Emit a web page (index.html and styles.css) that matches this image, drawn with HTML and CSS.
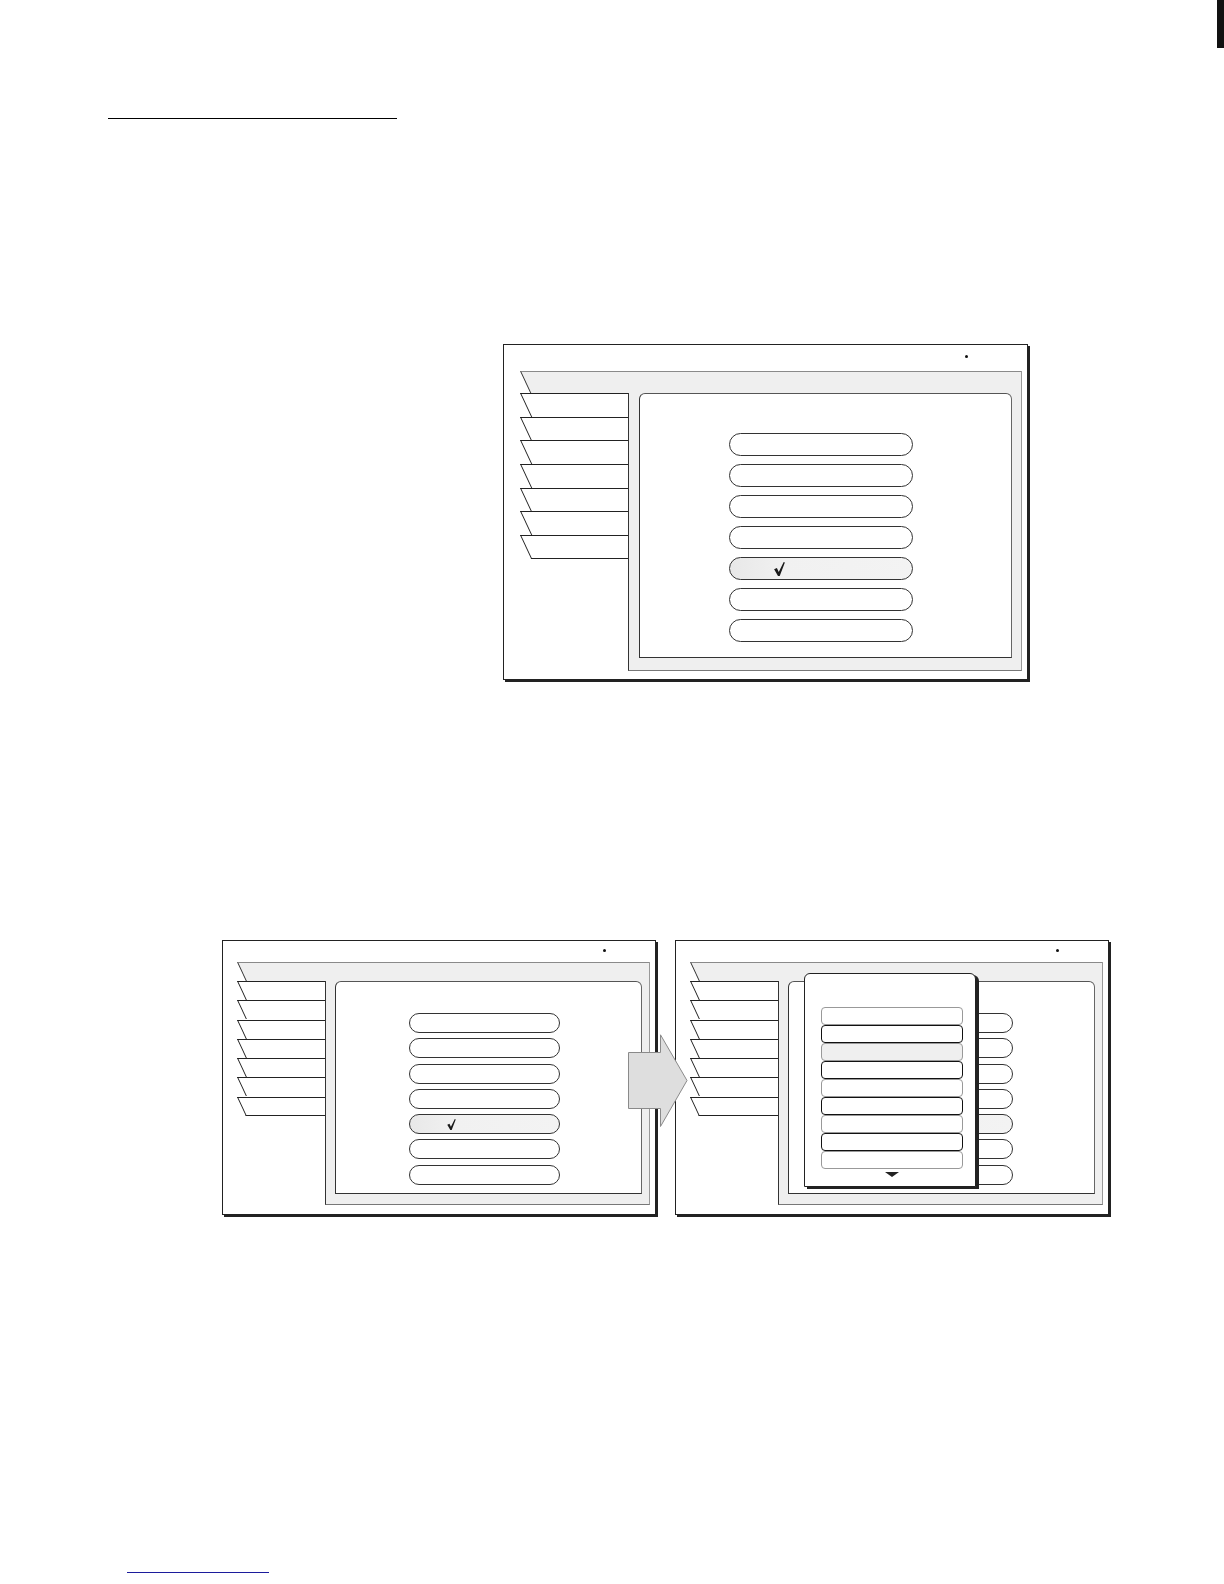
FILE: index.html
```html
<!DOCTYPE html>
<html>
<head>
<meta charset="utf-8">
<title>Menu</title>
<link rel="stylesheet" href="styles.css">
</head>
<body>
<div class="page">
  <div class="edge-mark"></div>
  <div class="rule"></div>

  <section class="fig1">
    <div class="screen lg">
      <div class="head"><span class="dot"></span></div>
      <div class="band"><div class="band-in"></div></div>
      <div class="body">
        <div class="tabs">
          <div class="tab"><div class="tab-in"></div></div>
          <div class="tab"><div class="tab-in"></div></div>
          <div class="tab"><div class="tab-in"></div></div>
          <div class="tab"><div class="tab-in"></div></div>
          <div class="tab"><div class="tab-in"></div></div>
          <div class="tab"><div class="tab-in"></div></div>
          <div class="tab"><div class="tab-in"></div></div>
        </div>
        <div class="panel">
          <div class="content">
            <div class="pill"></div>
            <div class="pill"></div>
            <div class="pill"></div>
            <div class="pill"></div>
            <div class="pill sel"><svg class="check" viewBox="0 0 10 13"><path d="M0 6.8 L2.6 5.6 L4.3 9.2 L8.9 0 L10 0.5 L5.2 12.9 L3.6 12.9 Z"/></svg></div>
            <div class="pill"></div>
            <div class="pill"></div>
          </div>
        </div>
      </div>
    </div>
  </section>

  <section class="fig2">
    <div class="screen sm">
      <div class="head"><span class="dot"></span></div>
      <div class="band"><div class="band-in"></div></div>
      <div class="body">
        <div class="tabs">
          <div class="tab"><div class="tab-in"></div></div>
          <div class="tab"><div class="tab-in"></div></div>
          <div class="tab"><div class="tab-in"></div></div>
          <div class="tab"><div class="tab-in"></div></div>
          <div class="tab"><div class="tab-in"></div></div>
          <div class="tab"><div class="tab-in"></div></div>
          <div class="tab"><div class="tab-in"></div></div>
        </div>
        <div class="panel">
          <div class="content">
            <div class="pill"></div>
            <div class="pill"></div>
            <div class="pill"></div>
            <div class="pill"></div>
            <div class="pill sel"><svg class="check" viewBox="0 0 10 13"><path d="M0 6.8 L2.6 5.6 L4.3 9.2 L8.9 0 L10 0.5 L5.2 12.9 L3.6 12.9 Z"/></svg></div>
            <div class="pill"></div>
            <div class="pill"></div>
          </div>
        </div>
      </div>
    </div>

    <div class="screen sm">
      <div class="head"><span class="dot"></span></div>
      <div class="band"><div class="band-in"></div></div>
      <div class="body">
        <div class="tabs">
          <div class="tab"><div class="tab-in"></div></div>
          <div class="tab"><div class="tab-in"></div></div>
          <div class="tab"><div class="tab-in"></div></div>
          <div class="tab"><div class="tab-in"></div></div>
          <div class="tab"><div class="tab-in"></div></div>
          <div class="tab"><div class="tab-in"></div></div>
          <div class="tab"><div class="tab-in"></div></div>
        </div>
        <div class="panel">
          <div class="content">
            <div class="pill"></div>
            <div class="pill"></div>
            <div class="pill"></div>
            <div class="pill"></div>
            <div class="pill sel"></div>
            <div class="pill"></div>
            <div class="pill"></div>
            <div class="popup">
              <div class="item"></div>
              <div class="item dark"></div>
              <div class="item sel"></div>
              <div class="item dark"></div>
              <div class="item"></div>
              <div class="item dark"></div>
              <div class="item"></div>
              <div class="item dark"></div>
              <div class="item"></div>
              <div class="more"></div>
            </div>
          </div>
        </div>
      </div>
    </div>

    <svg class="arrow" viewBox="0 0 60 94" width="60" height="94">
      <path d="M0.5 18.5 H32.5 V0.8 L59 46.5 L32.5 92.5 V74.5 H0.5 Z"/>
    </svg>
  </section>

  <div class="footline"></div>
</div>
</body>
</html>
```

FILE: styles.css
```css
* { box-sizing: border-box; }
html, body { margin: 0; padding: 0; background: #fff; }
body { font-family: "Liberation Sans", Arial, sans-serif; }

.page {
  position: relative;
  width: 1224px;
  min-height: 1584px;
  padding-top: 118px;
  overflow: hidden;
}

.edge-mark {
  position: absolute;
  top: 0;
  right: 0;
  width: 7px;
  height: 48px;
  background: #111;
}

.rule {
  margin-left: 108px;
  width: 289px;
  height: 1px;
  background: #000;
}

.fig1 { margin-top: 225px; margin-left: 503px; }

.fig2 {
  position: relative;
  margin-top: 260px;
  margin-left: 222px;
  display: flex;
  gap: 19px;
}

.footline {
  margin-top: 357px;
  margin-left: 127px;
  width: 142px;
  height: 1px;
  background: #1c1c9c;
}

/* ---------- screen ---------- */
.screen {
  width: var(--w);
  height: var(--h);
  border: 1px solid #222;
  box-shadow: 2px 2px 0 #222;
  background: #fff;
  display: flex;
  flex-direction: column;
  padding: 0 var(--padr) var(--padb) var(--padl);
  flex: none;
}

.lg {
  --w: 525px; --h: 336px;
  --head: 26px; --padl: 16px; --padr: 5px; --padb: 8px;
  --dotr: 54px; --dott: 10px;
  --bandh: 22px; --tabw: 108px; --tabh: 23.7px;
  --cml: 10px; --cmr: 9px; --cmb: 12px;
  --pl: 89px; --pt: 39px; --pw: 184px; --ph: 23px; --pg: 8px;
  --ckl: 44px; --ckw: 11px; --ckh: 14px;
}

.sm {
  --w: 434px; --h: 275px;
  --head: 21px; --padl: 14px; --padr: 5px; --padb: 9px;
  --dotr: 44px; --dott: 8px;
  --bandh: 19px; --tabw: 88px; --tabh: 19.3px;
  --cml: 9px; --cmr: 7px; --cmb: 10px;
  --pl: 73px; --pt: 31px; --pw: 151px; --ph: 20px; --pg: 5.3px;
  --ckl: 37px; --ckw: 9px; --ckh: 11px;
}

.head {
  height: var(--head);
  flex: none;
  display: flex;
  justify-content: flex-end;
  align-items: flex-start;
  padding-top: var(--dott);
  padding-right: var(--dotr);
}

.dot {
  width: 3px;
  height: 3px;
  border-radius: 50%;
  background: #111;
}

.band {
  height: var(--bandh);
  flex: none;
  overflow: hidden;
  border-right: 1px solid #999;
}

.band-in {
  height: 100%;
  width: calc(100% + 40px);
  transform: skewX(25deg);
  transform-origin: 0 0;
  background: #efefef;
  border-top: 1px solid #8a8a8a;
  border-left: 1px solid #333;
}

.body {
  flex: 1;
  display: flex;
  min-height: 0;
}

.tabs {
  width: var(--tabw);
  flex: none;
  overflow: hidden;
  display: flex;
  flex-direction: column;
}

.tab {
  height: var(--tabh);
  flex: none;
}

.tab-in {
  height: 100%;
  width: calc(100% + 40px);
  transform: skewX(25deg);
  transform-origin: 0 0;
  background: #fff;
  border-top: 1px solid #222;
  border-left: 1px solid #222;
}

.tab:last-child .tab-in { border-bottom: 1px solid #222; }

.panel {
  flex: 1;
  display: flex;
  flex-direction: column;
  background: #efefef;
  border-left: 1px solid #333;
  border-right: 1px solid #999;
  border-bottom: 1px solid #777;
  padding: 0 var(--cmr) var(--cmb) var(--cml);
}

.content {
  flex: 1;
  position: relative;
  background: #fff;
  border: 1px solid #333;
  border-top-color: #555;
  border-right-color: #666;
  border-radius: 6px 6px 0 0;
  padding: var(--pt) 0 0 var(--pl);
  display: flex;
  flex-direction: column;
  gap: var(--pg);
}

.pill {
  flex: none;
  width: var(--pw);
  height: var(--ph);
  border: 1px solid #333;
  border-radius: 999px;
  background: #fff;
  display: flex;
  align-items: center;
  padding-left: var(--ckl);
}

.pill.sel {
  background: linear-gradient(90deg, #e8e8e8 0%, #f1f1f1 30%, #f3f3f3 100%);
}

.check {
  width: var(--ckw);
  height: var(--ckh);
  fill: #1a1a1a;
}

/* ---------- popup ---------- */
.popup {
  position: absolute;
  left: 15px;
  top: -9px;
  width: 172px;
  height: 214px;
  background: #fff;
  border: 1px solid #222;
  border-radius: 6px 6px 0 0;
  box-shadow: 3px 2px 0 #222;
  padding: 33px 12px 0 16px;
  display: flex;
  flex-direction: column;
}

.item {
  flex: none;
  width: 142px;
  height: 18px;
  border: 1px solid #999;
  border-radius: 4px;
  background: #fff;
}

.item.dark { border-color: #111; }
.item.sel { background: #efefef; }

.more {
  align-self: center;
  width: 0;
  height: 0;
  margin-top: 3px;
  border-left: 7px solid transparent;
  border-right: 7px solid transparent;
  border-top: 5px solid #222;
}

.arrow {
  position: absolute;
  left: 406px;
  top: 94px;
  fill: #dedede;
  stroke: #8a8a8a;
  stroke-width: 1;
}
```
